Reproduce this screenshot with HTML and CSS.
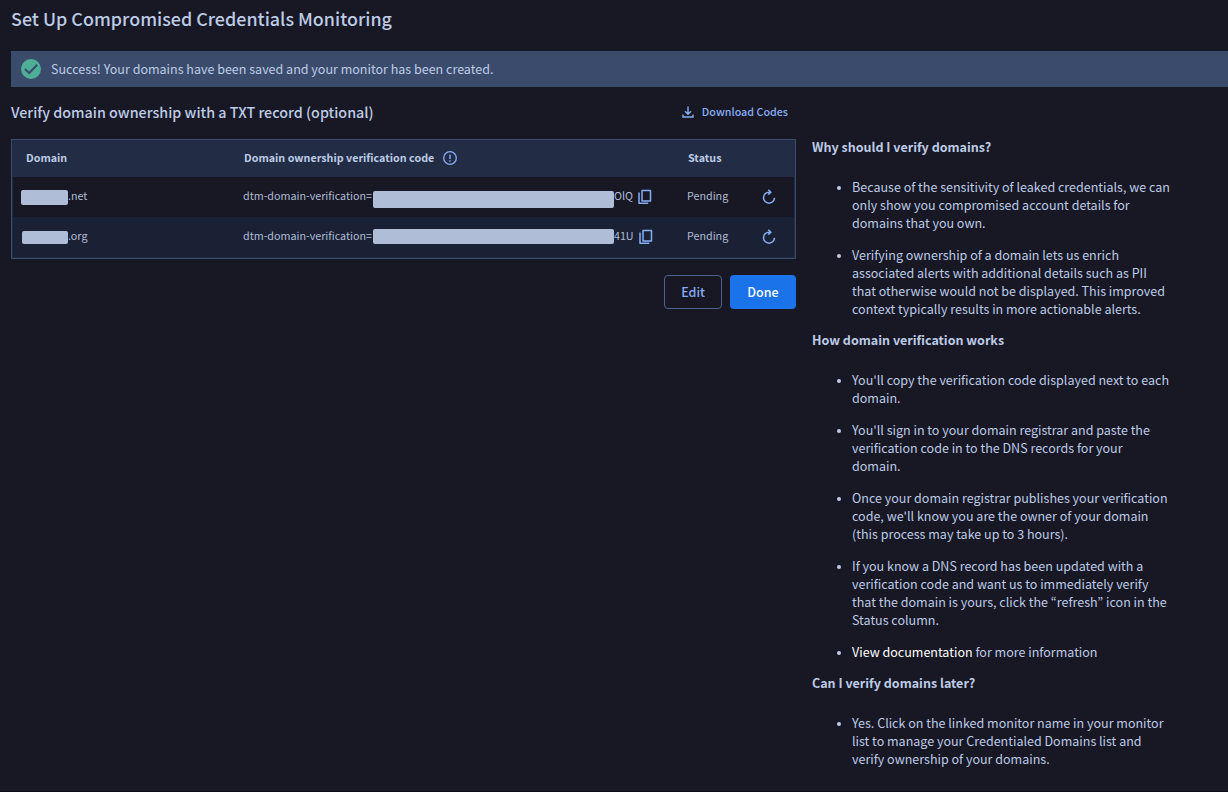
FILE: index.html
```html
<!DOCTYPE html>
<html lang="en">
<head>
<meta charset="utf-8">
<title>Set Up Compromised Credentials Monitoring</title>
<link rel="stylesheet" href="styles.css">
</head>
<body>
<svg class="symbols" aria-hidden="true">
  <symbol id="copy" viewBox="0 0 14 16"><path d="M4 1.500h8.500v10.500H4z" fill="none" stroke="currentColor" stroke-width="1.500" stroke-linejoin="round"/><path d="M1 3.500V14.200h9.200" fill="none" stroke="currentColor" stroke-width="1.500" stroke-linejoin="round"/></symbol>
  <symbol id="refresh" viewBox="0 0 14 16"><path d="M8 3.200H7A5.500 5.500 0 1 0 12.500 8.700" fill="none" stroke="currentColor" stroke-width="1.500"/><path d="M6.300 0.800 8.800 3.200 6.300 5.600" fill="none" stroke="currentColor" stroke-width="1.500"/></symbol>
</svg>
<main class="page">
  <h1 class="title">Set Up Compromised Credentials Monitoring</h1>
  <div class="banner" role="status">
    <svg class="banner-icon" viewBox="0 0 20 20"><circle cx="10" cy="10" r="10" fill="#4fae96"/><path d="M3.800 10 8.200 14 16.200 5.800" fill="none" stroke="#3b4b6b" stroke-width="2"/></svg>
    <span>Success! Your domains have been saved and your monitor has been created.</span>
  </div>
  <div class="columns">
    <section class="verify">
      <div class="verify-head">
        <h2 class="subtitle">Verify domain ownership with a TXT record (optional)</h2>
        <button class="download" type="button">
          <svg class="download-icon" viewBox="0 0 12 12"><path d="M6 0.500V8M3 5.200 6 8.200 9 5.200M1 8.500V11H11V8.500" fill="none" stroke="currentColor" stroke-width="1.400"/></svg>
          Download Codes
        </button>
      </div>
      <table class="domains">
        <thead>
          <tr>
            <th class="col-domain" scope="col">Domain</th>
            <th class="col-code" scope="col"><span class="cell">Domain ownership verification code
              <svg class="info-icon" viewBox="0 0 14 14"><circle cx="7" cy="7" r="6.300" fill="none" stroke="currentColor" stroke-width="1.300"/><path d="M7 3.500V8M7 9.200V10.700" stroke="currentColor" stroke-width="1.400"/></svg></span></th>
            <th class="col-status" scope="col">Status</th>
            <td class="col-action"></td>
          </tr>
        </thead>
        <tbody>
          <tr>
            <td><span class="cell"><span class="mask mask-name"></span>.net</span></td>
            <td><span class="cell">dtm-domain-verification=<span class="mask mask-code mask-tall"></span>OlQ<button class="icon-button copy" type="button" aria-label="Copy code"><svg class="icon"><use href="#copy"/></svg></button></span></td>
            <td>Pending</td>
            <td><button class="icon-button" type="button" aria-label="Refresh status"><svg class="icon"><use href="#refresh"/></svg></button></td>
          </tr>
          <tr>
            <td><span class="cell"><span class="mask mask-name mask-short"></span>.org</span></td>
            <td><span class="cell">dtm-domain-verification=<span class="mask mask-code"></span>41U<button class="icon-button copy" type="button" aria-label="Copy code"><svg class="icon"><use href="#copy"/></svg></button></span></td>
            <td>Pending</td>
            <td><button class="icon-button" type="button" aria-label="Refresh status"><svg class="icon"><use href="#refresh"/></svg></button></td>
          </tr>
        </tbody>
      </table>
      <div class="actions">
        <button class="button button-outline" type="button">Edit</button>
        <button class="button button-primary" type="button">Done</button>
      </div>
    </section>
    <aside class="help">
      <h3>Why should I verify domains?</h3>
      <ul>
        <li>Because of the sensitivity of leaked credentials, we can only show you compromised account details for domains that you own.</li>
        <li>Verifying ownership of a domain lets us enrich associated alerts with additional details such as PII that otherwise would not be displayed. This improved context typically results in more actionable alerts.</li>
      </ul>
      <h3>How domain verification works</h3>
      <ul>
        <li>You'll copy the verification code displayed next to each domain.</li>
        <li>You'll sign in to your domain registrar and paste the verification code in to the DNS records for your domain.</li>
        <li>Once your domain registrar publishes your verification code, we'll know you are the owner of your domain (this process may take up to 3 hours).</li>
        <li>If you know a DNS record has been updated with a verification code and want us to immediately verify that the domain is yours, click the “refresh” icon in the Status column.</li>
        <li><a href="#">View documentation</a> for more information</li>
      </ul>
      <h3>Can I verify domains later?</h3>
      <ul>
        <li>Yes. Click on the linked monitor name in your monitor list to manage your Credentialed Domains list and verify ownership of your domains.</li>
      </ul>
    </aside>
  </div>
</main>
</body>
</html>
```

FILE: styles.css
```css
* { box-sizing: border-box; }

body {
  margin: 0;
  background: #181724;
  color: #bccbe6;
  font-family: "Noto Sans CJK KR", "Open Sans", sans-serif;
  font-size: 14px;
  font-size-adjust: 0.486;
  line-height: 18px;
}

button { font: inherit; font-size-adjust: inherit; cursor: pointer; }

.symbols { display: none; }

.page {
  min-height: 100vh;
  padding: 6px 0 0 11px;
  border-bottom: 1px solid #0f0e17;
}

.title { margin: 0; font-size: 20px; line-height: 24px; font-weight: 500; }

.banner {
  display: flex;
  align-items: center;
  gap: 10px;
  height: 36px;
  margin-top: 21px;
  padding: 0 10px;
  background: #3b4b6b;
}
.banner-icon { width: 20px; height: 20px; }

.columns { display: grid; grid-template-columns: minmax(0, 1fr) 416px; gap: 16px; }

.verify-head {
  display: flex;
  align-items: center;
  justify-content: space-between;
  height: 52px;
  padding: 0 8px 2px 0;
}
.subtitle { margin: 0; font-size: 16px; font-weight: 500; }
.download {
  display: flex;
  align-items: center;
  gap: 8px;
  padding: 0;
  border: 0;
  background: none;
  color: #86aef5;
  font-size: 12px;
  font-weight: 500;
}
.download-icon { width: 12px; height: 12px; }

.domains {
  width: 100%;
  table-layout: fixed;
  padding: 0 1px 1px;
  border: 1px solid #3b4b6b;
  border-collapse: separate;
  border-spacing: 0;
  background: #222c44;
  font-size: 12px;
}
.domains th, .domains td { height: 40px; padding: 0 0 2px; text-align: left; }
.domains thead th, .domains thead td { height: 37px; }
.domains thead .col-domain { width: 230px; padding-left: 13px; }
.domains thead .col-code, .domains thead .col-status { padding-left: 1px; }
.domains .col-status { width: 75px; }
.domains .col-action { width: 32px; }
.domains tbody tr { background: #181724; }
.domains tbody tr:nth-child(2) { background: #1b2134; }
.domains tbody td:first-child { padding-left: 8px; }
.domains tbody td { color: #b0bdd6; }

.cell { display: flex; align-items: center; white-space: nowrap; }
.mask { flex: none; height: 15px; border-radius: 2px; background: #b0bdd6; }
.mask-name { width: 47px; margin-top: 2px; }
.mask-short { width: 46px; height: 13px; margin-left: 1px; }
.mask-code { width: 241px; margin-left: 1px; }
.mask-tall { height: 17px; margin-top: 6px; }
.info-icon { width: 14px; height: 14px; margin-left: 9px; color: #86aef5; }
.icon-button { display: block; margin-top: 2px; padding: 0; border: 0; background: none; color: #86aef5; }
.copy { margin-left: 5px; }
.icon { display: block; width: 14px; height: 16px; }

.actions { display: flex; justify-content: flex-end; gap: 8px; margin-top: 16px; }
.button {
  height: 34px;
  padding: 0 16px;
  border: 1px solid transparent;
  border-radius: 4px;
  font-weight: 500;
}
.button-outline { border-color: #4d618a; background: none; color: #86aef5; }
.button-primary { min-width: 66px; background: #1a73e8; color: #fff; }

.help { padding: 51px 56px 0 0; }
.help h3 { margin: 0; font-size: 14px; font-weight: 700; }
.help ul { margin: 22px 0 13px; padding-left: 40px; }
.help li + li { margin-top: 14px; }
.help li::marker { font-family: "Liberation Sans", sans-serif; font-size: 16px; }
.help a { color: #fff; text-decoration: none; }
```
